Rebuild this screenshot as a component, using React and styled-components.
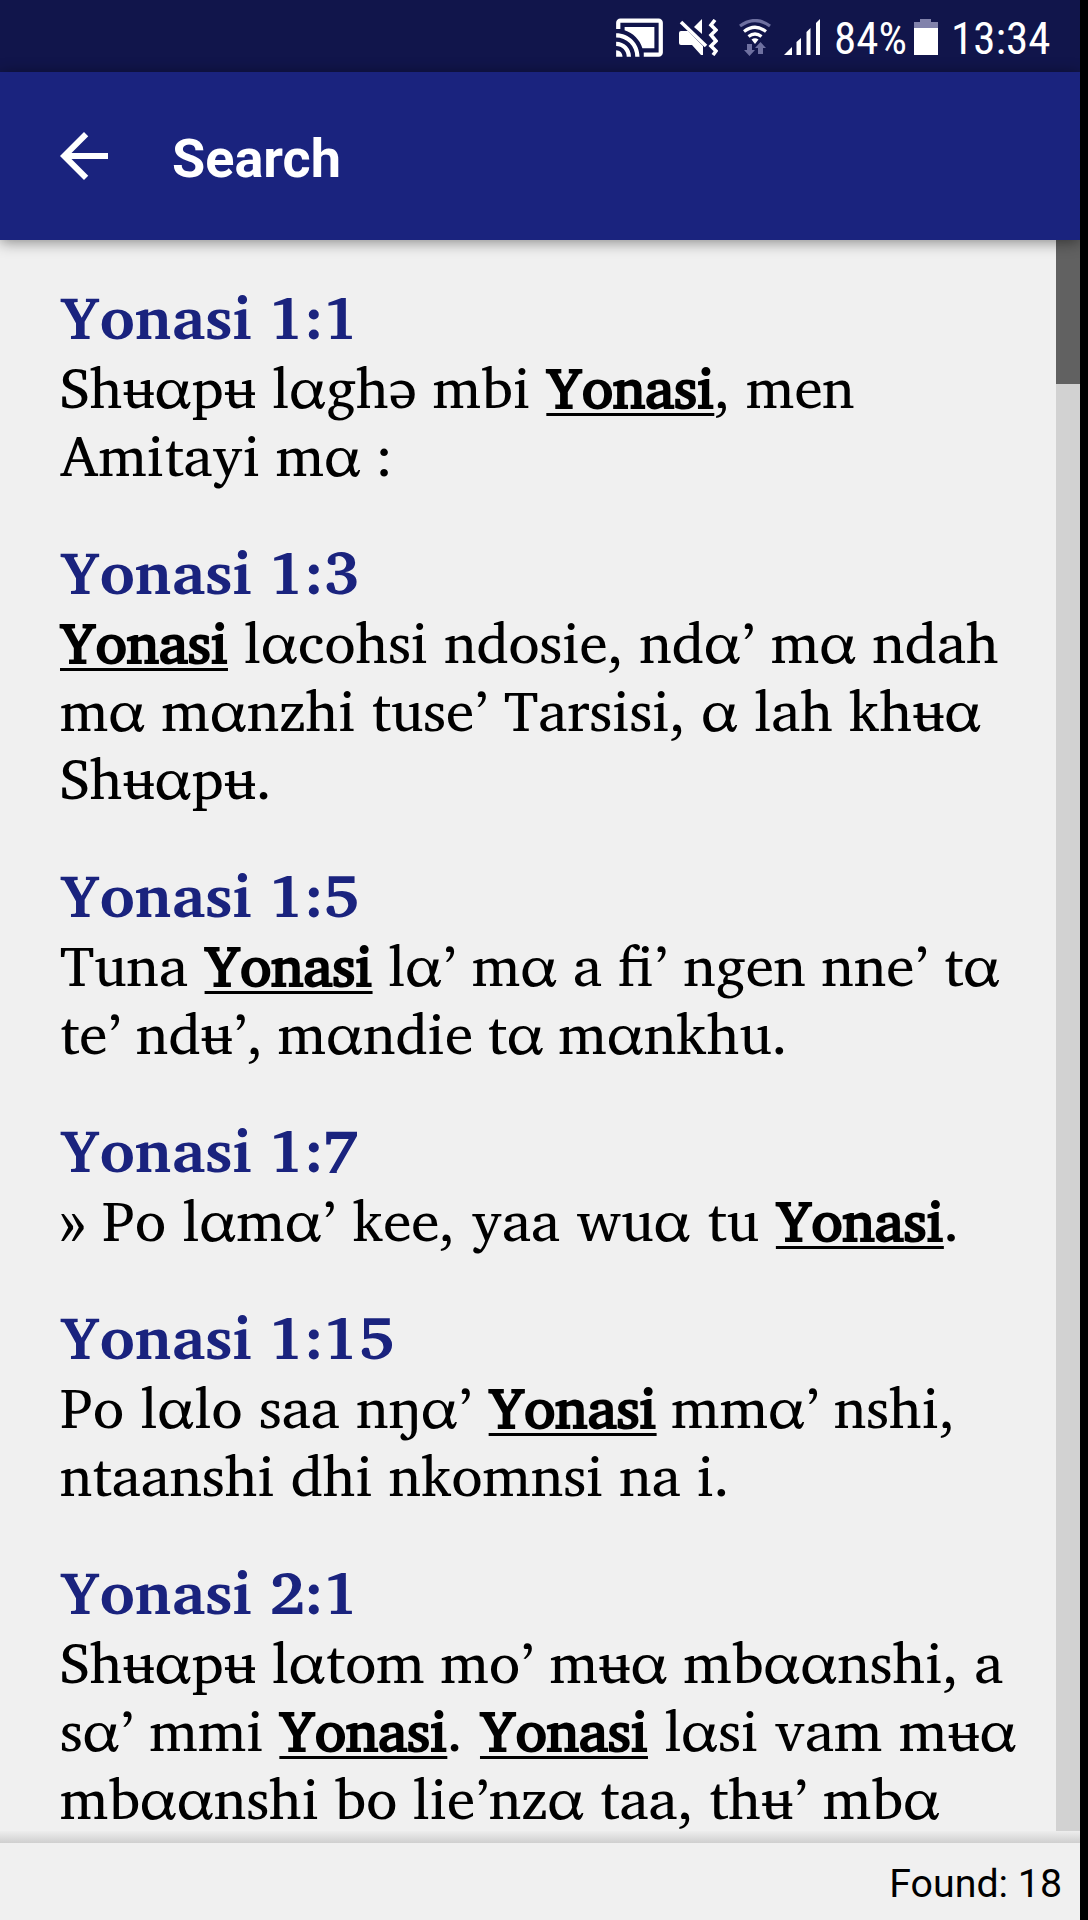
import React from 'react';
import styled, { createGlobalStyle } from 'styled-components';
import { MdArrowBack, MdCastConnected } from 'react-icons/md';

// gaps: word spacing for each piece of the line, matches included
const results = [
	{
		id: 1,
		title: 'Yonasi 1:1',
		lines: [
			{ text: 'Shʉαpʉ lαghə mbi *Yonasi*, men', gaps: [-0.6, 0, -1] },
			{ text: 'Amitayi mα :', gaps: [-1] },
		],
	},
	{
		id: 2,
		title: 'Yonasi 1:3',
		lines: [
			{ text: '*Yonasi* lαcohsi ndosie, ndα’ mα ndah', gaps: [0, 0, -0.7] },
			{ text: 'mα mαnzhi tuse’ Tarsisi, α lah khʉα', gaps: [-0.7] },
			{ text: 'Shʉαpʉ.', gaps: [0] },
		],
	},
	{
		id: 3,
		title: 'Yonasi 1:5',
		lines: [
			{ text: 'Tuna *Yonasi* lα’ mα a fi’ ngen nne’ tα', gaps: [0, 0, -1] },
			{ text: 'te’ ndʉ’, mαndie tα mαnkhu.', gaps: [-2] },
		],
	},
	{ id: 4, title: 'Yonasi 1:7', lines: [{ text: '» Po lαmα’ kee, yaa wuα tu *Yonasi*.', gaps: [0, 0, 0] }] },
	{
		id: 5,
		title: 'Yonasi 1:15',
		lines: [
			{ text: 'Po lαlo saa nŋα’ *Yonasi* mmα’ nshi,', gaps: [-0.1, 0, -2] },
			{ text: 'ntaanshi dhi nkomnsi na i.', gaps: [-0.7] },
		],
	},
	{
		id: 6,
		title: 'Yonasi 2:1',
		lines: [
			{ text: 'Shʉαpʉ lαtom mo’ mʉα mbααnshi, a', gaps: [-0.9] },
			{ text: 'sα’ mmi *Yonasi*. *Yonasi* lαsi vam mʉα', gaps: [-1, 0, 0, 0, -0.2] },
			{ text: 'mbααnshi bo lie’nzα taa, thʉ’ mbα', gaps: [-1.2] },
		],
	},
];

// odd pieces are the words between asterisks
const highlight = line =>
	line.text.split('*').map((part, i) =>
		i % 2 ? (
			<Match key={i}>{part}</Match>
		) : (
			<Plain key={i} $gap={line.gaps[i]}>
				{part}
			</Plain>
		),
	);

const MuteIcon = () => (
	<svg width="39" height="37" viewBox="0 0 39 37" fill="#fff">
		<path d="M15 8l8-8v15z" />
		<path d="M2.500 3l25 24" stroke="#11154b" strokeWidth="8" />
		<path d="M2 3l25 24" stroke="#fff" strokeWidth="3.600" />
		<path d="M2 12h7l15 15v9h-2l-9-10H2q-2 0-2-2V14q0-2 2-2z" />
		<path d="M36 1l-4 5 5 5-5 5 5 6-5 5 5 5-3 4" fill="none" stroke="#fff" strokeWidth="3.600" />
	</svg>
);

const WifiIcon = () => (
	<svg width="32" height="37" viewBox="0 0 32 37" fill="none" stroke="#fff" strokeWidth="3.2">
		<path d="M1 7Q16-4 31 7" stroke="#6e70a0" />
		<path d="M5 12.5Q16 4 27 12.5" />
		<path d="M9.5 17.5Q16 12.500 22.500 17.500" />
		<path d="M12.500 20.500Q16 18 19.500 20.500L16 25z" fill="#fff" stroke="none" />
		<path d="M8 25h5v6h3l-5.500 6L5 31h3z" fill="#6e70a0" stroke="none" />
		<path d="M19 35v-6h-3l5.500-6 5.500 6h-3v6z" fill="#6e70a0" stroke="none" />
	</svg>
);

const SignalIcon = () => (
	<svg width="36" height="36" viewBox="0 0 36 36" fill="#fff">
		<path d="M0 36l8-8v8z" />
		<path d="M12.500 36V23l4.500-4v17z" />
		<path d="M22.500 36V13l4-4v27z" />
		<path d="M32 36V4l4-4v36z" />
	</svg>
);

const BatteryIcon = () => (
	<svg width="24" height="36" viewBox="0 0 24 36">
		<path d="M6 0h11v3h7v6H0V3h6z" fill="#8182ab" />
		<path d="M0 9h24v27H0z" fill="#fff" />
	</svg>
);

const App = () => {
	return (
		<React.Fragment>
			<GlobalStyle />
			<Phone>
				<StatusBar>
					<CastSlot>
						<MdCastConnected size={51} color="#fff" />
					</CastSlot>
					<IconSlot $left={14}>
						<MuteIcon />
					</IconSlot>
					<IconSlot $left={21}>
						<WifiIcon />
					</IconSlot>
					<IconSlot $left={13}>
						<SignalIcon />
					</IconSlot>
					<StatusText $left={14} $width={70}>
						84%
					</StatusText>
					<IconSlot $left={10}>
						<BatteryIcon />
					</IconSlot>
					<StatusText $left={13} $width={100}>
						13:34
					</StatusText>
				</StatusBar>
				<Toolbar>
					<MdArrowBack size={72} color="#fff" />
					<Title>Search</Title>
				</Toolbar>
				<Content>
					<List>
						{results.map(e => (
							<Result key={e.id}>
								<Reference>{e.title}</Reference>
								{e.lines.map(line => (
									<Line key={line.text}>{highlight(line)}</Line>
								))}
							</Result>
						))}
					</List>
					<ScrollTrack>
						<ScrollThumb />
					</ScrollTrack>
				</Content>
				<Divider />
				<Footer>Found: 18</Footer>
			</Phone>
		</React.Fragment>
	);
};
export default App;

const GlobalStyle = createGlobalStyle`
	* {
		box-sizing: border-box;
	}
	body {
		margin: 0;
		background: #000;
	}
`;

const Phone = styled.div`
	display: flex;
	flex-direction: column;
	width: 1080px;
	height: 1920px;
	background: #f0f0f0;
	overflow: hidden;
`;

const StatusBar = styled.div`
	display: flex;
	align-items: flex-start;
	flex: none;
	height: 72px;
	padding-left: 614px;
	background: #11154b;
`;

const CastSlot = styled.div`
	display: flex;
	margin-top: 12px;
`;

const IconSlot = styled.div`
	display: flex;
	margin: 19px 0 0 ${props => props.$left}px;
`;

const StatusText = styled.span`
	width: ${props => props.$width}px;
	margin-left: ${props => props.$left}px;
	font-family: 'Roboto Condensed', Roboto, sans-serif;
	font-size: 45px;
	line-height: 77px;
	white-space: nowrap;
	color: #fff;
`;

const Toolbar = styled.div`
	display: flex;
	align-items: center;
	flex: none;
	height: 168px;
	padding-left: 48px;
	background: #1a237e;
	box-shadow: 0 2px 14px rgba(0, 0, 0, 0.45);
	z-index: 1;
`;

const Title = styled.h1`
	margin: 4px 0 0 52px;
	font-family: Roboto, sans-serif;
	font-size: 54px;
	font-weight: 700;
	color: #fff;
`;

const Content = styled.div`
	display: flex;
	flex: none;
	height: 1591px;
	overflow: hidden;
`;

const List = styled.div`
	flex: 1;
	padding: 44px 0 0 60px;
	font-family: 'Charis SIL', 'DejaVu Serif Condensed', serif;
	font-size: 57px;
	color: #000;
`;

const Result = styled.div`
	margin-bottom: 50px;
`;

const Reference = styled.h2`
	margin: 0;
	height: 69px;
	font-size: 60px;
	line-height: 64px;
	font-weight: 700;
	color: #1a237e;
`;

const Line = styled.div`
	height: 68px;
	line-height: 68px;
	white-space: nowrap;
`;

const Plain = styled.span`
	word-spacing: ${props => props.$gap}px;
`;

const Match = styled.span`
	-webkit-text-stroke: 2px #000;
	text-decoration: underline;
	text-decoration-thickness: 3px;
	text-underline-offset: 5px;
	text-decoration-skip-ink: none;
`;

const ScrollTrack = styled.div`
	width: 24px;
	background: #d2d2d2;
`;

const ScrollThumb = styled.div`
	height: 144px;
	background: #616161;
`;

const Divider = styled.div`
	flex: none;
	height: 12px;
	background: linear-gradient(#ededed, #cfcfcf);
`;

const Footer = styled.div`
	flex: 1;
	padding: 18px 18px 0 0;
	font-family: Roboto, sans-serif;
	font-size: 39.3px;
	line-height: 46px;
	text-align: right;
	color: #000;
`;
